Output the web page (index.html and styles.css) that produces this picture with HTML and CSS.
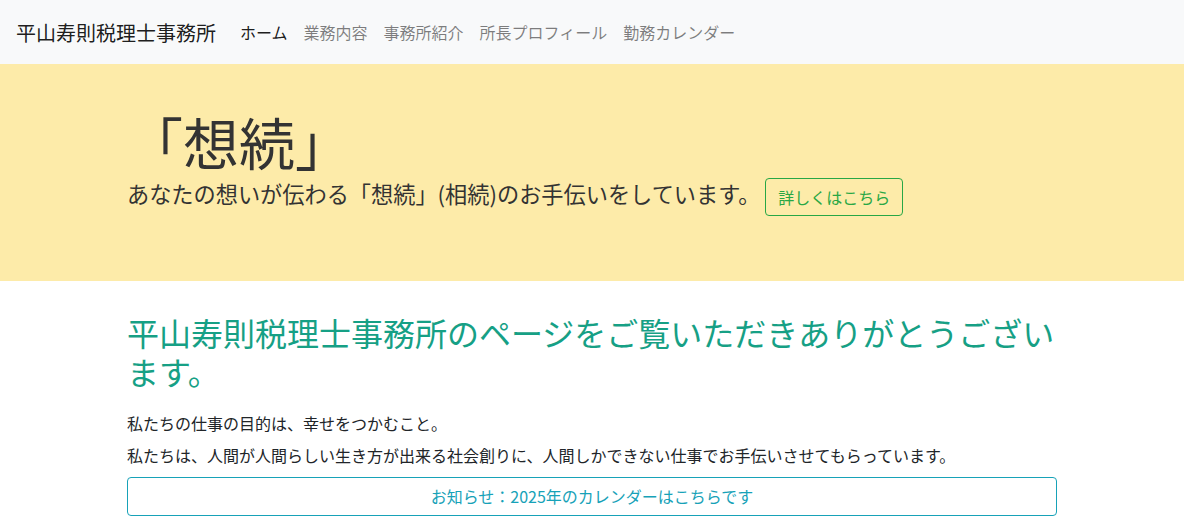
FILE: index.html
```html
<!DOCTYPE html>
<html lang="ja">
<head>
    <meta charset="UTF-8">
    <meta name="viewport" content="width=device-width, initial-scale=1.0">
    <title>平山寿則税理士事務所</title>
    <link rel="stylesheet" href="styles.css">
</head>
<body>
    <nav class="navbar">
        <a class="brand" href="#">平山寿則税理士事務所</a>
        <ul class="nav">
            <li><a class="nav-link active" href="#">ホーム</a></li>
            <li><a class="nav-link" href="#">業務内容</a></li>
            <li><a class="nav-link" href="#">事務所紹介</a></li>
            <li><a class="nav-link" href="#">所長プロフィール</a></li>
            <li><a class="nav-link" href="#">勤務カレンダー</a></li>
        </ul>
    </nav>

    <div class="jumbotron">
        <div class="container">
            <h1 class="display">「想続」</h1>
            <p class="lead">あなたの想いが伝わる「想続」(相続)のお手伝いをしています。 <a class="btn-detail" href="#">詳しくはこちら</a></p>
        </div>
    </div>

    <div class="container">
        <h2 class="welcome">平山寿則税理士事務所のページをご覧いただきありがとうございます。</h2>
        <p class="text">私たちの仕事の目的は、幸せをつかむこと。</p>
        <p class="text">私たちは、人間が人間らしい生き方が出来る社会創りに、人間しかできない仕事でお手伝いさせてもらっています。</p>
        <a class="notice" href="#">お知らせ：2025年のカレンダーはこちらです</a>
    </div>
</body>
</html>
```

FILE: styles.css
```css
body {
    margin: 0;
    font-family: "Noto Sans CJK JP", "Noto Sans", sans-serif;
    font-size: 16px;
    color: #212529;
    background: #fff;
}

a {
    text-decoration: none;
}

.container {
    width: 930px;
    margin: 0 auto;
}

/* navbar */
.navbar {
    display: flex;
    align-items: center;
    height: 64px;
    padding: 0 16px;
    background-color: #f8f9fa;
    box-sizing: border-box;
}
.brand {
    font-size: 20px;
    color: rgba(0, 0, 0, .9);
    margin-right: 16px;
}
.nav {
    display: flex;
    list-style: none;
    margin: 0;
    padding: 0;
}
.nav-link {
    display: block;
    padding: 8px;
    color: rgba(0, 0, 0, .5);
}
.nav-link.active {
    color: rgba(0, 0, 0, .9);
}

/* jumbotron */
.jumbotron {
    background-color: #fdeba9;
    padding: 43px 0 51px;
    margin-bottom: 32px;
}
.display {
    font-size: 56px;
    font-weight: 400;
    line-height: 1.2;
    margin: 0;
    color: #333;
}
.lead {
    font-size: 22.2px;
    font-weight: 400;
    color: #333;
    margin: 0 0 14px;
    line-height: 39px;
}
.btn-detail {
    display: inline-block;
    vertical-align: middle;
    font-size: 16px;
    line-height: 24px;
    padding: 6px 12px;
    border: 1px solid #28a745;
    border-radius: 4px;
    color: #28a745;
}

/* content */
.welcome {
    font-size: 32px;
    font-weight: 400;
    line-height: 1.2;
    color: #16a085;
    margin: 0 0 17px;
}
.text {
    margin: 0;
    line-height: 32px;
}
.notice {
    display: block;
    margin-top: 6px;
    padding: 6px 12px 7px;
    line-height: 24px;
    text-align: center;
    border: 1px solid #17a2b8;
    border-radius: 4px;
    color: #17a2b8;
}
```
